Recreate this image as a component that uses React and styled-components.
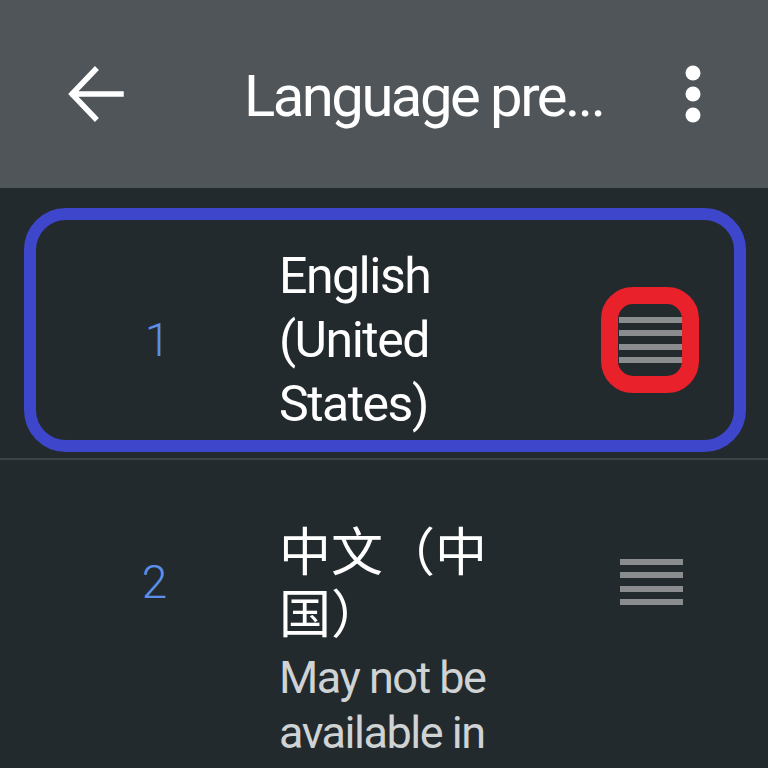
import React from "react";
import styled, { createGlobalStyle } from "styled-components";

const GlobalStyle = createGlobalStyle`
  html, body {
    margin: 0;
    padding: 0;
    background: #232a2e;
  }
  body {
    font-family: Roboto, "Noto Sans CJK SC", sans-serif;
  }
`;

const Screen = styled.div`
  width: 768px;
  height: 768px;
  overflow: hidden;
  background: #232a2e;
  display: flex;
  flex-direction: column;
`;

const Header = styled.div`
  height: 188px;
  flex-shrink: 0;
  background: #4f5559;
  display: grid;
  grid-template-columns: 190px 1fr 85px;
  align-items: center;
`;

const IconButton = styled.div`
  display: flex;
  align-items: center;
  justify-content: ${(p) => p.$justify || "center"};
  height: 100%;
`;

const Title = styled.h1`
  margin: 4px 0 0 0;
  padding-left: 54px;
  color: #ffffff;
  font-family: Roboto, sans-serif;
  font-weight: 400;
  font-size: 58px;
  letter-spacing: -2.5px;
  white-space: nowrap;
`;

const List = styled.div`
  display: flex;
  flex-direction: column;
`;

const Row = styled.div`
  display: grid;
  grid-template-columns: 279px 1fr 160px;
  align-items: center;
  padding: ${(p) => p.$pad};
  border-bottom: ${(p) => (p.$divider ? "2px solid #3b4347" : "none")};
`;

const Selected = styled.div`
  grid-column: 1 / -1;
  margin: 20px 22px 6px 24px;
  border: 12px solid #3e47cc;
  border-radius: 42px;
  height: 200px;
  padding-top: 20px;
  display: grid;
  grid-template-columns: 243px 1fr 150px;
  align-items: center;
`;

const Index = styled.div`
  color: #5b8fe8;
  font-family: Roboto, sans-serif;
  font-size: 46px;
  font-weight: 300;
  text-align: center;
  padding-left: ${(p) => p.$shift || 0}px;
  margin-top: ${(p) => p.$lift || 0}px;
`;

const Name = styled.div`
  color: #ffffff;
  font-family: Roboto, "Noto Sans CJK SC", sans-serif;
  font-size: ${(p) => (p.$cjk ? "52px" : "50px")};
  font-weight: 400;
  line-height: ${(p) => (p.$cjk ? "62px" : "64px")};
  letter-spacing: ${(p) => (p.$cjk ? "0" : "-1.5px")};
  width: 230px;
`;

const Sub = styled.div`
  grid-column: 2;
  color: #cfd3d4;
  font-family: Roboto, sans-serif;
  font-size: 45px;
  font-weight: 400;
  line-height: 55px;
  letter-spacing: -1.5px;
  margin-top: 3px;
`;

const HandleCell = styled.div`
  display: flex;
  align-items: center;
  align-self: center;
  grid-row: 1;
  grid-column: 3;
  padding-left: ${(p) => p.$indent || 0}px;
  margin-top: ${(p) => p.$lift || 0}px;
`;

const Ring = styled.div`
  width: 98px;
  height: 106px;
  box-sizing: border-box;
  border: 17px solid #e8212a;
  border-radius: 32px;
  display: flex;
  align-items: center;
  justify-content: center;
`;

const Bars = styled.div`
  display: flex;
  flex-direction: column;
  gap: 7.5px;
`;

const Bar = styled.div`
  width: 63px;
  height: 6px;
  background: #8a8c8d;
`;

const Handle = () => (
  <Bars>
    <Bar />
    <Bar />
    <Bar />
    <Bar />
  </Bars>
);

const BackArrow = () => (
  <svg width="60" height="60" viewBox="0 0 60 60">
    <path
      d="M56 30 H8 M30 6 L7 30 L30 54"
      fill="none"
      stroke="#ffffff"
      strokeWidth="5.5"
      strokeLinecap="square"
    />
  </svg>
);

const Kebab = () => (
  <svg width="20" height="60" viewBox="0 0 20 60">
    <circle cx="10" cy="9" r="7.5" fill="#ffffff" />
    <circle cx="10" cy="30" r="7.5" fill="#ffffff" />
    <circle cx="10" cy="51" r="7.5" fill="#ffffff" />
  </svg>
);

const App = () => {
  return (
    <Screen>
      <GlobalStyle />
      <Header>
        <IconButton>
          <BackArrow />
        </IconButton>
        <Title>Language pre...</Title>
        <IconButton $justify="flex-start">
          <Kebab />
        </IconButton>
      </Header>
      <List>
        <Row $divider $pad="0">
          <Selected>
            <Index>1</Index>
            <Name>
              English
              <br />
              (United
              <br />
              States)
            </Name>
            <HandleCell $indent={17}>
              <Ring>
                <Handle />
              </Ring>
            </HandleCell>
          </Selected>
        </Row>
        <Row $pad="63px 0 0 0">
          <Index $shift={30} $lift={-6}>
            2
          </Index>
          <Name $cjk>中文（中国）</Name>
          <HandleCell $indent={12} $lift={-6}>
            <Handle />
          </HandleCell>
          <Sub>
            May not be
            <br />
            available in
          </Sub>
        </Row>
      </List>
    </Screen>
  );
};

export default App;
